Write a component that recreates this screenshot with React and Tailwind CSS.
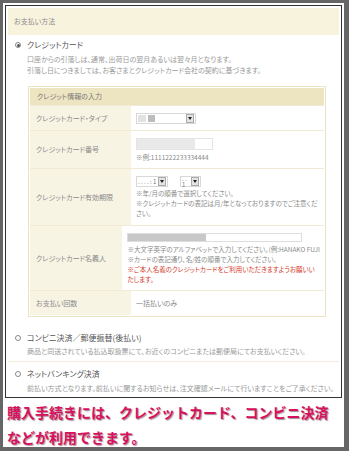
import React from "react";

const jp = "font-['Noto_Sans_CJK_JP','Noto_Sans',sans-serif]";
const palt = "[font-feature-settings:'palt']";

function Radio({ checked }) {
    return (
        <span className="w-[6px] h-[6px] rounded-full border border-[#888] flex items-center justify-center shrink-0 bg-white">
            {checked ? <span className="w-[3px] h-[3px] rounded-full bg-[#555]" /> : null}
        </span>
    );
}

function SelectBox({ width, children }) {
    return (
        <div className="flex items-center h-[11px] border border-[#d8d8d8] bg-white" style={{ width }}>
            <div className="flex-1 flex items-center gap-[2px] px-[1px] h-full">{children}</div>
            <div className="w-[8px] h-[9px] bg-[#e4e4e4] border border-[#aaa] flex items-center justify-center mr-[1px]">
                <span className="w-0 h-0 border-l-[2px] border-r-[2px] border-t-[3px] border-l-transparent border-r-transparent border-t-[#222]" />
            </div>
        </div>
    );
}

function Row({ label, height, children }) {
    return (
        <div className="flex border-t border-[#f0ead6]" style={{ height }}>
            <div className="w-[101px] bg-[#f8f4e4] flex items-center pl-[6px] text-[7px] text-[#8a8a8a]">{label}</div>
            <div className="flex-1 flex flex-col justify-center pl-[5px] pr-[4px] text-[6.5px] leading-[10px] text-[#8a8a8a]">{children}</div>
        </div>
    );
}

export default function App() {
    return (
        <div className={`w-[349px] h-[451px] bg-white border-t-[3px] border-l-[3px] border-r-[5px] border-b-[4px] border-[#666] p-[2px] flex flex-col ${jp}`}>
            <div className={`h-[393px] shrink-0 overflow-hidden border border-[#333] px-[2px] pt-[2px] flex flex-col bg-white ${palt}`}>
                <div className="h-[27px] shrink-0 bg-[#f8f3dd] flex items-center pl-[6px] text-[7px] text-[#8a8a8a]">お支払い方法</div>

                <div className="pl-[7px] pt-[4px] shrink-0">
                    <div className="flex items-center gap-[6px] h-[12px]">
                        <Radio checked />
                        <span className="text-[8px] text-[#555]">クレジットカード</span>
                    </div>
                    <div className="pl-[12px] pt-[3px] text-[7px] leading-[11px] text-[#999]">
                        <p>口座からの引落しは、通常、出荷日の翌月あるいは翌々月となります。</p>
                        <p>引落し日につきましては、お客さまとクレジットカード会社の契約に基づきます。</p>
                    </div>
                </div>

                <div className="ml-[20px] mr-[13px] mt-[10px] border border-[#ece3c4] p-[1px] bg-white shrink-0">
                    <div className="h-[17px] bg-[#ede4c2] flex items-center pl-[7px] text-[7px] text-[#777]">クレジット情報の入力</div>
                    <Row label="クレジットカード・タイプ" height={25}>
                        <SelectBox width={60}>
                            <span className="w-[8px] h-[7px] bg-[#e2e2e2]" />
                            <span className="w-[7px] h-[7px] bg-[#bdbdbd]" />
                        </SelectBox>
                    </Row>
                    <Row label="クレジットカード番号" height={38}>
                        <div className="w-[77px] h-[12px] border border-[#e4e4e4] bg-white flex">
                            <div className="w-[58px] h-full bg-[#e9e9e9]" />
                        </div>
                        <p className="mt-[2px]">※例:1111222233334444</p>
                    </Row>
                    <Row label="クレジットカード有効期限" height={57}>
                        <div className="flex gap-[12px] mb-[1px]">
                            <SelectBox width={32}>
                                <span className="text-[6px] leading-[6px] text-[#777]">. . . . : 1</span>
                            </SelectBox>
                            <SelectBox width={21}>
                                <span className="text-[6px] leading-[6px] text-[#777]">. . 1</span>
                            </SelectBox>
                        </div>
                        <p>※年/月の順番で選択してください。</p>
                        <p>※クレジットカードの表記は月/年となっておりますのでご注意ください。</p>
                    </Row>
                    <Row label="クレジットカード名義人" height={65}>
                        <div className="w-[175px] h-[9px] border border-[#ddd] bg-white flex mb-[2px]">
                            <div className="w-[78px] h-full bg-[#c8c8c8]" />
                        </div>
                        <p className="whitespace-nowrap overflow-hidden">※大文字英字のアルファベットで入力してください。(例:HANAKO FUJI</p>
                        <p>※カードの表記通り、名/姓の順番で入力してください。</p>
                        <p className="text-[#d33a2a]">※ご本人名義のクレジットカードをご利用いただきますようお願いいたします。</p>
                    </Row>
                    <Row label="お支払い回数" height={25}>
                        <p className="text-[7px]">一括払いのみ</p>
                    </Row>
                </div>

                <div className="pl-[7px] pt-[15px] h-[45px] shrink-0 border-b border-[#f1ecdc]">
                    <div className="flex items-center gap-[6px] h-[12px]">
                        <Radio />
                        <span className="text-[8px] text-[#555]">コンビニ決済／郵便振替(後払い)</span>
                    </div>
                    <p className="pl-[12px] pt-[2px] text-[7px] leading-[11px] text-[#999]">商品と同送されている払込取扱票にて、お近くのコンビニまたは郵便局にてお支払いください。</p>
                </div>
                <div className="pl-[7px] pt-[6px] shrink-0">
                    <div className="flex items-center gap-[6px] h-[12px]">
                        <Radio />
                        <span className="text-[8px] text-[#555]">ネットバンキング決済</span>
                    </div>
                    <p className="pl-[12px] pt-[3px] text-[7px] leading-[11px] text-[#999] whitespace-nowrap overflow-hidden">前払い方式となります。前払いに関するお知らせは、注文確認メールにて行いますことをご了承ください。</p>
                </div>
            </div>

            <div className="pl-[2px] pt-[2px] text-[14px] leading-[25px] font-bold text-[#d6115e] [text-shadow:1px_1px_1px_rgba(60,0,20,0.45)]">
                <p className="whitespace-nowrap">購入手続きには、クレジットカード、コンビニ決済</p>
                <p>などが利用できます。</p>
            </div>
        </div>
    );
}
